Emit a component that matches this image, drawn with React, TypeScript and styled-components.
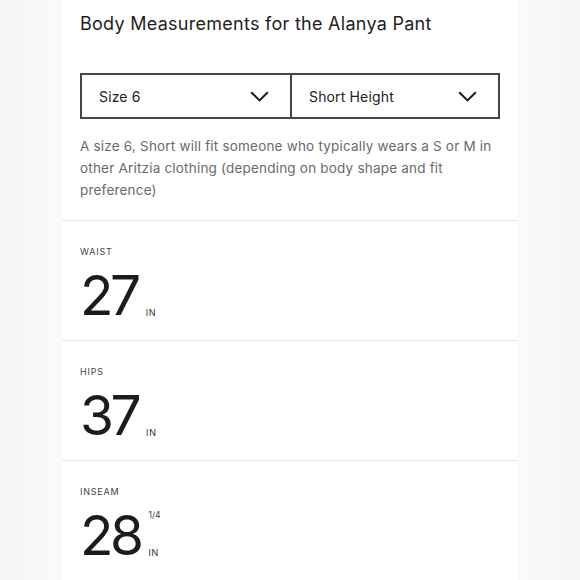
import React from 'react'
import styled, { createGlobalStyle } from 'styled-components'

const GlobalStyle = createGlobalStyle`
  html, body {
    margin: 0;
    padding: 0;
    background: #f7f7f7;
  }
  body {
    font-family: 'Inter', 'Lato', sans-serif;
    color: #222;
  }
`

const Page = styled.div`
  width: 580px;
  height: 580px;
  overflow: hidden;
  display: flex;
  justify-content: flex-start;
  padding-left: 62px;
  box-sizing: border-box;
  background: linear-gradient(90deg, #f4f4f4 0%, #fafafa 60px, #fafafa 520px, #f5f5f5 100%);
`

const Card = styled.div`
  width: 456px;
  background: #fff;
  display: flex;
  flex-direction: column;
`

const Header = styled.div`
  padding: 11px 18px 19px;
`

const Title = styled.h1`
  margin: 0;
  font-size: 18px;
  font-weight: 400;
  line-height: 26px;
  letter-spacing: 0.27px;
  color: #1e1e1e;
`

const SelectRow = styled.div`
  margin-top: 36px;
  display: grid;
  grid-template-columns: 1fr 1fr;
  border: 2px solid #454545;
  height: 46px;
  box-sizing: border-box;
`

const Select = styled.div<{ divided?: boolean }>`
  display: flex;
  align-items: center;
  justify-content: space-between;
  padding: 0 21px 0 17px;
  border-left: ${({ divided }) => (divided ? '2px solid #454545' : 'none')};
  font-size: 14px;
  letter-spacing: 0.15px;
  color: #222;
`

const Chevron = () => (
  <svg width="19" height="11" viewBox="0 0 19 11" fill="none">
    <path d="M1.2 1.2L9.5 9.4L17.8 1.2" stroke="#1a1a1a" strokeWidth="2" />
  </svg>
)

const Note = styled.p`
  margin: 16px 0 0;
  font-size: 13.5px;
  line-height: 22px;
  letter-spacing: 0.2px;
  color: #6a6a6a;
`

const Measure = styled.div`
  height: 120px;
  box-sizing: border-box;
  border-top: 1.5px solid #e8e8e8;
  padding: 25px 18px 0;
`

const Label = styled.div`
  font-size: 9px;
  letter-spacing: 0.8px;
  color: #444;
  text-transform: uppercase;
  line-height: 12px;
`

const ValueRow = styled.div`
  display: flex;
  align-items: flex-end;
  margin-top: 11px;
  height: 50px;
`

const Number = styled.span`
  font-size: 55px;
  line-height: 48px;
  font-weight: 400;
  color: #1c1c1c;
  letter-spacing: -3.5px;
`

const UnitStack = styled.div`
  display: flex;
  flex-direction: column;
  justify-content: space-between;
  align-self: stretch;
  margin-left: 8px;
  padding-bottom: 1px;
`

const Fraction = styled.span`
  font-size: 8.5px;
  color: #333;
  line-height: 10px;
  margin-top: 1px;
`

const Unit = styled.span`
  font-size: 9px;
  color: #333;
  letter-spacing: 0.6px;
  line-height: 10px;
`

const measurements = [
  { label: 'Waist', value: '27' },
  { label: 'Hips', value: '37' },
  { label: 'Inseam', value: '28', fraction: '1/4' },
]

export default function App() {
  return (
    <>
      <GlobalStyle />
      <Page>
        <Card>
          <Header>
            <Title>Body Measurements for the Alanya Pant</Title>
            <SelectRow>
              <Select>
                Size 6
                <Chevron />
              </Select>
              <Select divided>
                Short Height
                <Chevron />
              </Select>
            </SelectRow>
            <Note>
              A size 6, Short will fit someone who typically wears a S or M in other Aritzia clothing (depending on
              body shape and fit preference)
            </Note>
          </Header>
          {measurements.map(m => (
            <Measure key={m.label}>
              <Label>{m.label}</Label>
              <ValueRow>
                <Number>{m.value}</Number>
                <UnitStack>
                  <Fraction>{m.fraction ?? ''}</Fraction>
                  <Unit>IN</Unit>
                </UnitStack>
              </ValueRow>
            </Measure>
          ))}
        </Card>
      </Page>
    </>
  )
}
